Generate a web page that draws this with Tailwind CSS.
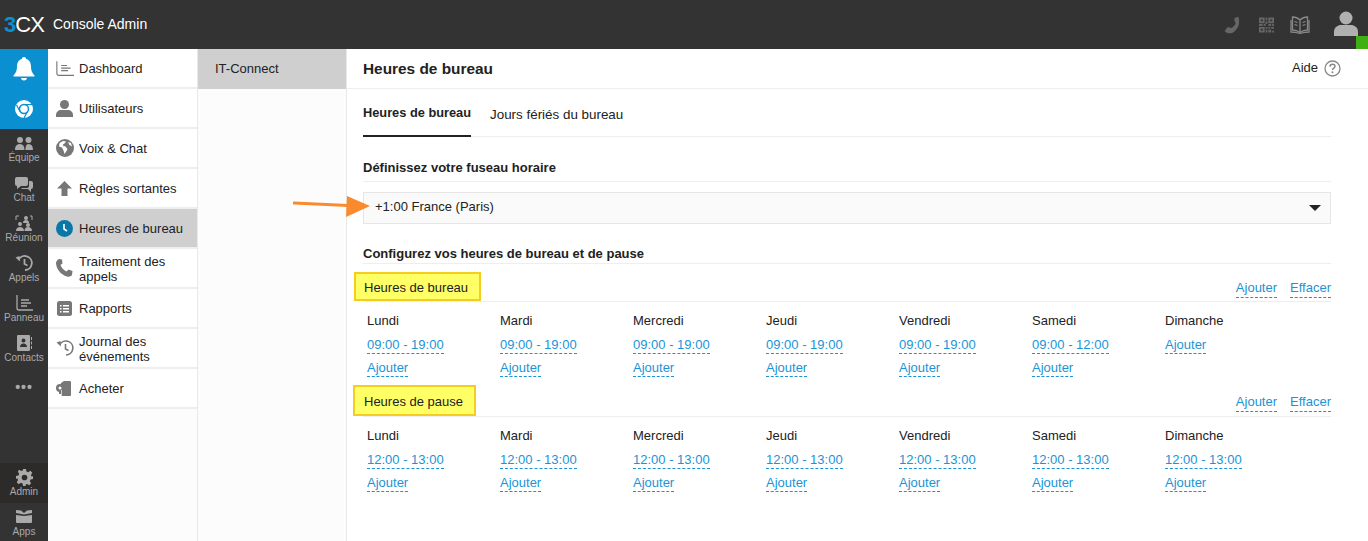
<!DOCTYPE html>
<html lang="fr">
<head>
  <meta charset="UTF-8" />
  <title>Console Admin</title>
  <script src="https://cdn.jsdelivr.net/npm/@tailwindcss/browser@4"></script>
</head>
<body class="h-[541px] overflow-hidden bg-white font-['Liberation_Sans',Arial,sans-serif] text-[13px] text-[#222]">

  <!-- Header -->
  <header class="h-[49px] bg-[#333333] flex items-center text-white">
    <div class="w-[53px] pl-[4px] flex items-baseline text-[22px] leading-none tracking-[-1px] pt-[1px]">
      <span class="text-[#0a90d0] font-bold">3</span><span class="text-white">CX</span>
    </div>
    <span class="text-[14px]">Console Admin</span>
    <div class="ml-auto flex items-center h-full relative">
      <svg class="w-[18px] h-[18px] mr-[17px]" viewBox="0 0 24 24" fill="#666"><path d="M19 1l-5 1.500c-.5 3 .5 5 1.500 7-1 3-3 5-6 6.500-2-1-4-1.500-5.500-.5L1 20c3 4 9 4 13 .5 5-4.500 8-11 5-19.500z"/></svg>
      <svg class="w-[15px] h-[16px] mr-[16px]" viewBox="0 0 16 16" fill="#666"><path d="M0 0h6v6H0zM2 2v2h2V2zM10 0h6v6h-6zM12 2v2h2V2zM0 10h6v6H0zM2 12v2h2v-2zM7 0h2v3H7zM7 4h2v3H7zM0 7h4v2H0zM5 7h2v2H5zM10 7h3v2h-3zM14 7h2v2h-2zM7 10h2v2H7zM10 10h2v2h-2zM13 10h3v2h-3zM7 13h2v3H7zM10 13h3v3h-3zM14 14h2v2h-2z"/></svg>
      <svg class="w-[20px] h-[20px] mr-[17px]" viewBox="0 0 20 20" fill="none" stroke="#888" stroke-width="1.300"><path d="M10 5C8 3 5 2 2.500 2v13c3 0 5.500 1 7.500 2.500C12 16 14.500 15 17.500 15V2C15 2 12 3 10 5zM10 5v12.500"/><path d="M1 5v12c3 0 6 .500 9 1.500 3-1 6-1.500 9-1.500V5M4.500 6.500l3 1M4.500 9.500l3 1M12.500 7.500l3-1M12.500 10.500l3-1"/></svg>
      <div class="w-[37px] h-full flex justify-center pt-[11px] mr-[4px]">
        <svg class="w-[24px] h-[26px]" viewBox="0 0 24 26" fill="#b0b0b0"><circle cx="12" cy="7" r="6.500"/><path d="M0 25v-4c0-5 4-7 7-7h10c3 0 7 2 7 7v4z"/></svg>
      </div>
      <span class="absolute right-0 bottom-0 w-[12px] h-[13px] bg-[#3eb013]"></span>
    </div>
  </header>

  <div class="flex h-[492px]">
    <!-- Icon rail -->
    <aside class="w-[48px] bg-[#333333] flex flex-col text-[10px] text-[#aaaaaa] leading-none shrink-0">
      <div class="h-[40px] bg-[#0a90d0] flex items-center justify-center">
        <svg class="w-[22px] h-[24px]" viewBox="0 0 22 24" fill="#fff"><path d="M11 0c1.200 0 2 .800 2 1.800C16.500 2.800 18 6 18 9.500c0 4 1 6.500 3.500 9v1h-21v-1C3 16 4 13.500 4 9.500 4 6 5.500 2.800 9 1.800 9 .8 9.800 0 11 0zM8 21h6c0 1.500-1.300 2.500-3 2.500S8 22.500 8 21z"/></svg>
      </div>
      <div class="h-[40px] bg-[#0a90d0] flex items-center justify-center">
        <svg class="w-[18px] h-[18px]" viewBox="0 0 18 18"><circle cx="9" cy="9" r="9" fill="#fff"/><circle cx="9" cy="9" r="4.500" fill="none" stroke="#0a90d0" stroke-width="1.500"/><path d="M9 4.500h8M5 11.500L1.500 5M12.500 11.500L9 18" stroke="#0a90d0" stroke-width="1.200" fill="none"/></svg>
      </div>
      <div class="h-[40px] flex flex-col items-center pt-[8px]">
        <svg class="w-[18px] h-[14px]" viewBox="0 0 18 14" fill="#aaa"><circle cx="5" cy="3" r="3"/><circle cx="13.500" cy="3" r="3"/><path d="M0 13c0-4 2-6 5-6s4.500 2 4.500 6zM10.500 13c0-3 .500-6 3-6 3 0 4.500 2 4.500 6z"/></svg>
        <span class="mt-[2px]">Équipe</span>
      </div>
      <div class="h-[40px] flex flex-col items-center pt-[8px]">
        <svg class="w-[18px] h-[15px]" viewBox="0 0 18 15" fill="#aaa"><rect x="0" y="0" width="13" height="9" rx="2"/><path d="M2 8v4l4-3z"/><path d="M14 4h2a2 2 0 012 2v4a2 2 0 01-2 2v3l-3-3H8a2 2 0 01-2-1h6a2 2 0 002-2z"/></svg>
        <span class="mt-[1px]">Chat</span>
      </div>
      <div class="h-[40px] flex flex-col items-center pt-[6px]">
        <svg class="w-[18px] h-[17px]" viewBox="0 0 18 17" fill="#aaa"><circle cx="11" cy="3" r="2"/><circle cx="5" cy="9" r="2"/><circle cx="13" cy="10" r="2"/><path d="M8 8c0-2 1-3 3-3s3 1 3 3zM1 16c0-3 2-4 4-4s4 1 4 4zM9.500 16c0-3 1.500-4 3.500-4s4 1 4 4z"/><path d="M1 5V1h3M17 5V1h-2" fill="none" stroke="#aaa"/></svg>
        <span class="mt-[1px]">Réunion</span>
      </div>
      <div class="h-[40px] flex flex-col items-center pt-[6px]">
        <svg class="w-[18px] h-[16px]" viewBox="0 0 18 16" fill="none" stroke="#aaa" stroke-width="1.800"><path d="M3.500 5A7 7 0 1110 15M9.500 4v5l3 1.500"/><path d="M.5 2.500l4.500 4-.5-5.500z" fill="#aaa" stroke="none"/></svg>
        <span class="mt-[2px]">Appels</span>
      </div>
      <div class="h-[40px] flex flex-col items-center pt-[6px]">
        <svg class="w-[17px] h-[16px]" viewBox="0 0 17 16" fill="none" stroke="#aaa" stroke-width="1.300"><path d="M1 0v13c0 1 .500 2 2 2h14M5 5h8M5 8h10M5 11h6"/></svg>
        <span class="mt-[2px]">Panneau</span>
      </div>
      <div class="h-[40px] flex flex-col items-center pt-[6px]">
        <svg class="w-[17px] h-[16px]" viewBox="0 0 17 16" fill="#aaa"><path fill-rule="evenodd" d="M2 0h11a1 1 0 011 1v14a1 1 0 01-1 1H2a1 1 0 01-1-1V1a1 1 0 011-1zm5.500 3.500a2 2 0 100 4 2 2 0 000-4zM4 12c0-2 1.500-3.500 3.500-3.500S11 10 11 12z"/><path d="M15 2h1v3h-1zM15 6.500h1v3h-1zM15 11h1v3h-1z"/></svg>
        <span class="mt-[2px]">Contacts</span>
      </div>
      <div class="h-[40px] flex items-start justify-center pt-[11px] text-[14px] font-bold tracking-[1px]">•••</div>
      <div class="flex-1"></div>
      <div class="h-[40px] bg-[#2d2b2a] flex flex-col items-center pt-[6px]">
        <svg class="w-[17px] h-[17px]" viewBox="0 0 24 24" fill="#aaa"><path fill-rule="evenodd" d="M10 0h4l.8 3.500 2.400 1 3-1.900 2.800 2.800-1.900 3 1 2.400L24 10v4l-3.500.8-1 2.400 1.900 3-2.800 2.800-3-1.900-2.400 1L14 24h-4l-.8-3.500-2.400-1-3 1.900-2.800-2.800 1.900-3-1-2.400L0 14v-4l3.500-.8 1-2.400-1.900-3L4.400 1l3 1.900 2.400-1zM12 8a4 4 0 100 8 4 4 0 000-8z"/></svg>
        <span class="mt-[1px]">Admin</span>
      </div>
      <div class="h-[38px] flex flex-col items-center pt-[6px]">
        <svg class="w-[18px] h-[14px]" viewBox="0 0 18 14" fill="#aaa"><path d="M1 4V1l5 .5L9 4l3-2.500L17 1v3l-8 1.500zM1 6l8 1 8-1v7a1 1 0 01-1 1H2a1 1 0 01-1-1z"/></svg>
        <span class="mt-[4px]">Apps</span>
      </div>
    </aside>

    <!-- Main menu -->
    <nav class="w-[150px] bg-[#fcfcfc] border-r border-[#e8e8e8] shrink-0">
      <div class="h-[40px] bg-white border-b-2 border-[#eeeeee] flex items-center gap-[5px] pl-[8px]">
        <svg class="w-[18px] h-[17px] shrink-0" viewBox="0 0 21 17" fill="none" stroke="#777" stroke-width="1.300"><path d="M1 0v14c0 1.500 1 2.500 2.500 2.500H21M6 5h7M6 8h11M6 11h8"/></svg>
        <span class="pt-[1px]">Dashboard</span>
      </div>
      <div class="h-[40px] bg-white border-b-2 border-[#eeeeee] flex items-center gap-[6px] pl-[8px]">
        <svg class="w-[17px] h-[17px] shrink-0" viewBox="0 0 17 17" fill="#777"><circle cx="8.500" cy="4.500" r="4.500"/><path d="M0 17v-2c0-3 2.500-5 5-5h7c2.500 0 5 2 5 5v2z"/></svg>
        <span class="pt-[1px]">Utilisateurs</span>
      </div>
      <div class="h-[40px] bg-white border-b-2 border-[#eeeeee] flex items-center gap-[5px] pl-[8px]">
        <svg class="w-[18px] h-[18px] shrink-0" viewBox="0 0 18 18"><circle cx="9" cy="9" r="9" fill="#777"/><path d="M7 2L3.500 4 3 7.500l3 1 1.500 3 1 3.500 2-3 1-2-2.500-3-1.500.5-.5-2 2-1.500 1-1.500zM12 3l1.500 3L16 7.500 15 4z" fill="#fff"/></svg>
        <span class="pt-[1px]">Voix &amp; Chat</span>
      </div>
      <div class="h-[40px] bg-white border-b-2 border-[#eeeeee] flex items-center gap-[7px] pl-[9px]">
        <svg class="w-[15px] h-[15px] shrink-0" viewBox="0 0 15 15" fill="#777"><path d="M7.500 0L15 7.500h-4.500V15h-6V7.500H0z"/></svg>
        <span class="pt-[1px]">Règles sortantes</span>
      </div>
      <div class="h-[40px] bg-[#cfcfcf] border-b-2 border-[#eeeeee] flex items-center gap-[6px] pl-[8px]">
        <svg class="w-[17px] h-[17px] shrink-0" viewBox="0 0 17 17"><circle cx="8.500" cy="8.500" r="8.500" fill="#0878a8"/><path d="M8 4v5l3 2" stroke="#fff" stroke-width="1.600" fill="none"/></svg>
        <span class="pt-[1px]">Heures de bureau</span>
      </div>
      <div class="h-[40px] bg-white border-b-2 border-[#eeeeee] flex items-center gap-[6px] pl-[8px]">
        <svg class="w-[17px] h-[18px] shrink-0" viewBox="0 0 17 18" fill="#777"><path d="M3 0l3 .5.500 4-2 1.500c1 3 3 5 6 6.500l2-2 4 1.500-.5 4c-1 1.500-3 2-5 1.500C5 16 .5 10 0 4.500 0 2.500 1 1 3 0z"/></svg>
        <span class="leading-[15px] w-[110px] pt-[1px]">Traitement des appels</span>
      </div>
      <div class="h-[40px] bg-white border-b-2 border-[#eeeeee] flex items-center gap-[7px] pl-[9px]">
        <svg class="w-[15px] h-[15px] shrink-0" viewBox="0 0 15 15"><rect width="15" height="15" rx="2.500" fill="#777"/><path d="M3 4h1.500v1.500H3zM6 4h6v1.500H6zM3 7h1.500v1.500H3zM6 7h6v1.500H6zM3 10h1.500v1.500H3zM6 10h6v1.500H6z" fill="#fff"/></svg>
        <span class="pt-[1px]">Rapports</span>
      </div>
      <div class="h-[40px] bg-white border-b-2 border-[#eeeeee] flex items-center gap-[5px] pl-[8px]">
        <svg class="w-[18px] h-[16px] shrink-0" viewBox="0 0 18 16" fill="none" stroke="#777" stroke-width="1.600"><path d="M3.500 5A7 7 0 1110 15M9.500 4v5l3 1.500"/><path d="M.5 2.500l4.500 4-.5-5.500z" fill="#777" stroke="none"/></svg>
        <span class="leading-[15px] w-[110px] pt-[1px]">Journal des événements</span>
      </div>
      <div class="h-[40px] bg-white border-b-2 border-[#eeeeee] flex items-center gap-[6px] pl-[8px]">
        <svg class="w-[15px] h-[15px] shrink-0 mr-[2px]" viewBox="0 0 15 15"><path d="M5 2l3-2h6a1 1 0 011 1v13a1 1 0 01-1 1H5v-2h-2v-3z" fill="#777"/><circle cx="4" cy="7" r="4" fill="#777"/><circle cx="4" cy="7" r="1.500" fill="#fff"/><path d="M5.500 9v6" stroke="#fff" stroke-width=".7"/></svg>
        <span class="pt-[1px]">Acheter</span>
      </div>
    </nav>

    <!-- Sub menu -->
    <div class="w-[149px] bg-[#fcfcfc] border-r border-[#e8e8e8] shrink-0">
      <div class="h-[40px] bg-[#cfcfcf] flex items-center pl-[17px]">IT-Connect</div>
    </div>

    <!-- Content -->
    <main class="flex-1 relative">
      <div class="h-[40px] border-b border-[#eeeeee] flex items-center justify-between pl-[16px] pr-[27px]">
        <h1 class="text-[15.4px] font-bold">Heures de bureau</h1>
        <div class="flex items-center gap-[6px] mt-[-1px]">
          <span>Aide</span>
          <svg class="w-[17px] h-[17px]" viewBox="0 0 17 17" fill="none"><circle cx="8.500" cy="8.500" r="7.500" stroke="#888" stroke-width="1.300"/><path d="M6 6.800C6 5 7.200 4.300 8.500 4.300 10 4.300 11 5.200 11 6.500 11 8 8.500 8.200 8.500 10" stroke="#888" stroke-width="1.500"/><circle cx="8.500" cy="12.300" r="1" fill="#888"/></svg>
        </div>
      </div>

      <div class="pl-[16px] pr-[37px]">
        <!-- Tabs -->
        <div class="h-[48px] border-b border-[#eeeeee] flex">
          <div class="w-[108px] h-[48px] border-b-2 border-[#222] flex items-center justify-center text-[12.8px] font-bold whitespace-nowrap pt-[1px]">Heures de bureau</div>
          <div class="ml-[19px] h-[48px] flex items-center text-[13.4px] pt-[5px]">Jours fériés du bureau</div>
        </div>

        <h2 class="mt-[20px] h-[25px] border-b border-[#eeeeee] font-bold leading-[22px]">Définissez votre fuseau horaire</h2>
        <div class="mt-[10px] h-[32px] bg-[#fafafa] border border-[#e6e6e6] flex items-center justify-between pl-[11px] pr-[9px]">
          <span class="mb-[2px]">+1:00 France (Paris)</span>
          <span class="w-0 h-0 border-x-[6px] border-x-transparent border-t-[6px] border-t-[#222]"></span>
        </div>

        <h2 class="mt-[20px] h-[20px] border-b border-[#eeeeee] font-bold leading-[20px]">Configurez vos heures de bureau et de pause</h2>

        <!-- Office hours -->
        <div class="mt-[8px] h-[30px] border-b border-[#eeeeee] flex items-end justify-between">
          <div class="ml-[-9px] w-[127px] h-[29px] bg-[#ffff66] border-2 border-[#f5cd1f] flex items-center pl-[8px] pt-[2px]">Heures de bureau</div>
          <div class="flex gap-[13px] text-[#1a94d6] pb-[3px]">
            <span class="border-b border-dashed border-[#1a94d6] leading-[19px]">Ajouter</span>
            <span class="border-b border-dashed border-[#1a94d6] leading-[19px]">Effacer</span>
          </div>
        </div>
        <div class="grid grid-cols-[repeat(7,133px)] pl-[4px] pt-[11px] h-[71px]">
          <div><p class="leading-[16px]">Lundi</p><span class="block w-fit mt-[7px] leading-[17px] text-[#1a94d6] border-b border-dashed border-[#1a94d6]">09:00 - 19:00</span><span class="block w-fit mt-[5px] leading-[17px] text-[#1a94d6] border-b border-dashed border-[#1a94d6]">Ajouter</span></div>
          <div><p class="leading-[16px]">Mardi</p><span class="block w-fit mt-[7px] leading-[17px] text-[#1a94d6] border-b border-dashed border-[#1a94d6]">09:00 - 19:00</span><span class="block w-fit mt-[5px] leading-[17px] text-[#1a94d6] border-b border-dashed border-[#1a94d6]">Ajouter</span></div>
          <div><p class="leading-[16px]">Mercredi</p><span class="block w-fit mt-[7px] leading-[17px] text-[#1a94d6] border-b border-dashed border-[#1a94d6]">09:00 - 19:00</span><span class="block w-fit mt-[5px] leading-[17px] text-[#1a94d6] border-b border-dashed border-[#1a94d6]">Ajouter</span></div>
          <div><p class="leading-[16px]">Jeudi</p><span class="block w-fit mt-[7px] leading-[17px] text-[#1a94d6] border-b border-dashed border-[#1a94d6]">09:00 - 19:00</span><span class="block w-fit mt-[5px] leading-[17px] text-[#1a94d6] border-b border-dashed border-[#1a94d6]">Ajouter</span></div>
          <div><p class="leading-[16px]">Vendredi</p><span class="block w-fit mt-[7px] leading-[17px] text-[#1a94d6] border-b border-dashed border-[#1a94d6]">09:00 - 19:00</span><span class="block w-fit mt-[5px] leading-[17px] text-[#1a94d6] border-b border-dashed border-[#1a94d6]">Ajouter</span></div>
          <div><p class="leading-[16px]">Samedi</p><span class="block w-fit mt-[7px] leading-[17px] text-[#1a94d6] border-b border-dashed border-[#1a94d6]">09:00 - 12:00</span><span class="block w-fit mt-[5px] leading-[17px] text-[#1a94d6] border-b border-dashed border-[#1a94d6]">Ajouter</span></div>
          <div><p class="leading-[16px]">Dimanche</p><span class="block w-fit mt-[7px] leading-[17px] text-[#1a94d6] border-b border-dashed border-[#1a94d6]">Ajouter</span></div>
        </div>

        <!-- Break hours -->
        <div class="mt-[13px] h-[31px] border-b border-[#eeeeee] flex items-end justify-between">
          <div class="ml-[-10px] w-[123px] h-[31px] bg-[#ffff66] border-2 border-[#f5cd1f] flex items-center pl-[9px] pt-[2px]">Heures de pause</div>
          <div class="flex gap-[13px] text-[#1a94d6] pb-[4px]">
            <span class="border-b border-dashed border-[#1a94d6] leading-[19px]">Ajouter</span>
            <span class="border-b border-dashed border-[#1a94d6] leading-[19px]">Effacer</span>
          </div>
        </div>
        <div class="grid grid-cols-[repeat(7,133px)] pl-[4px] pt-[11px]">
          <div><p class="leading-[16px]">Lundi</p><span class="block w-fit mt-[7px] leading-[17px] text-[#1a94d6] border-b border-dashed border-[#1a94d6]">12:00 - 13:00</span><span class="block w-fit mt-[5px] leading-[17px] text-[#1a94d6] border-b border-dashed border-[#1a94d6]">Ajouter</span></div>
          <div><p class="leading-[16px]">Mardi</p><span class="block w-fit mt-[7px] leading-[17px] text-[#1a94d6] border-b border-dashed border-[#1a94d6]">12:00 - 13:00</span><span class="block w-fit mt-[5px] leading-[17px] text-[#1a94d6] border-b border-dashed border-[#1a94d6]">Ajouter</span></div>
          <div><p class="leading-[16px]">Mercredi</p><span class="block w-fit mt-[7px] leading-[17px] text-[#1a94d6] border-b border-dashed border-[#1a94d6]">12:00 - 13:00</span><span class="block w-fit mt-[5px] leading-[17px] text-[#1a94d6] border-b border-dashed border-[#1a94d6]">Ajouter</span></div>
          <div><p class="leading-[16px]">Jeudi</p><span class="block w-fit mt-[7px] leading-[17px] text-[#1a94d6] border-b border-dashed border-[#1a94d6]">12:00 - 13:00</span><span class="block w-fit mt-[5px] leading-[17px] text-[#1a94d6] border-b border-dashed border-[#1a94d6]">Ajouter</span></div>
          <div><p class="leading-[16px]">Vendredi</p><span class="block w-fit mt-[7px] leading-[17px] text-[#1a94d6] border-b border-dashed border-[#1a94d6]">12:00 - 13:00</span><span class="block w-fit mt-[5px] leading-[17px] text-[#1a94d6] border-b border-dashed border-[#1a94d6]">Ajouter</span></div>
          <div><p class="leading-[16px]">Samedi</p><span class="block w-fit mt-[7px] leading-[17px] text-[#1a94d6] border-b border-dashed border-[#1a94d6]">12:00 - 13:00</span><span class="block w-fit mt-[5px] leading-[17px] text-[#1a94d6] border-b border-dashed border-[#1a94d6]">Ajouter</span></div>
          <div><p class="leading-[16px]">Dimanche</p><span class="block w-fit mt-[7px] leading-[17px] text-[#1a94d6] border-b border-dashed border-[#1a94d6]">12:00 - 13:00</span><span class="block w-fit mt-[5px] leading-[17px] text-[#1a94d6] border-b border-dashed border-[#1a94d6]">Ajouter</span></div>
        </div>
      </div>
    </main>
  </div>

  <!-- Annotation arrow -->
  <svg class="absolute left-[293px] top-[195px] w-[78px] h-[24px]" viewBox="0 0 78 24"><path d="M1 8l54 2.500" stroke="#f98a2e" stroke-width="3" stroke-linecap="round"/><path d="M54 1l23 10-24 11z" fill="#f98a2e"/></svg>
</body>
</html>
